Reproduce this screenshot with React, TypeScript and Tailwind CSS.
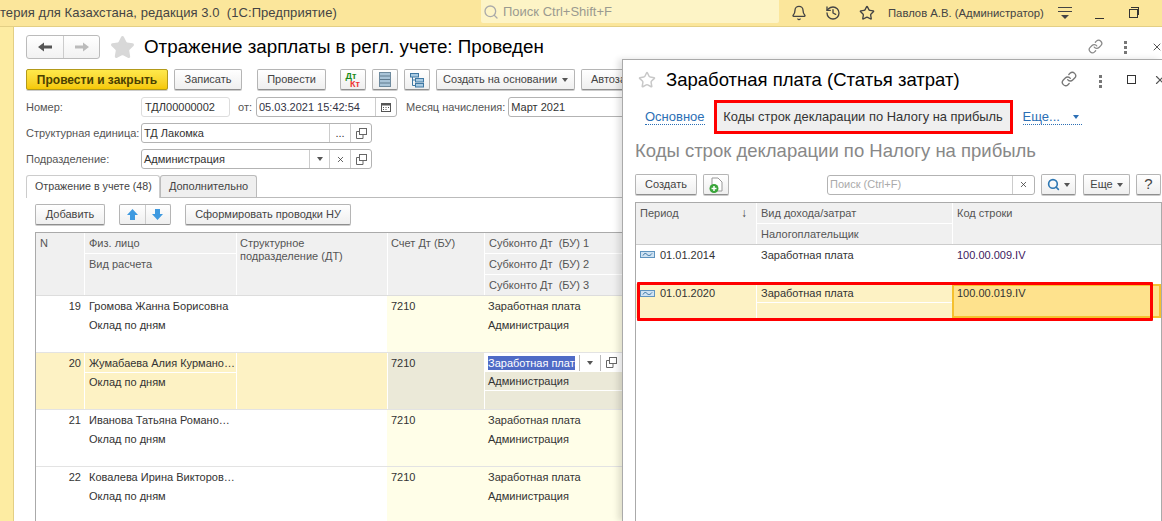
import React from 'react';
import { Bell, History, Star, Link, Search, X } from 'lucide-react';

const Caret = ({ className = 'border-t-[#555]' }: { className?: string }) => (
  <span className={`inline-block w-0 h-0 border-x-[3px] border-x-transparent border-t-[4px] ${className}`} />
);

const Dots = () => (
  <span className="flex flex-col gap-[2px]">
    <span className="w-[3px] h-[3px] bg-[#777]" />
    <span className="w-[3px] h-[3px] bg-[#777]" />
    <span className="w-[3px] h-[3px] bg-[#777]" />
  </span>
);

const OpenIcon = () => (
  <svg width="11" height="11" viewBox="0 0 11 11" fill="none" stroke="#666" strokeWidth="1">
    <rect x="3.5" y="0.5" width="7" height="6" />
    <path d="M3 3.5H0.5V10.5H7V7" />
  </svg>
);

const TrendIcon = () => (
  <svg width="15" height="7" viewBox="0 0 15 7" className="shrink-0 mt-[6px]">
    <rect x="0.5" y="0.5" width="14" height="6" fill="#cfe2f2" stroke="#5f94bf" />
    <path d="M3 4.5C4.5 2 5.5 2 7 3.5S10 5 12 2.5" fill="none" stroke="#2e6c9e" />
  </svg>
);

const Btn = ({ children, className = '' }: { children: React.ReactNode; className?: string }) => (
  <div className={`h-[21px] flex items-center justify-center rounded-[2px] border border-[#b5b5b5] border-b-[#8f8f8f] bg-gradient-to-b from-white to-[#efefef] text-[#444] shadow-[0_1px_0_#ccc] ${className}`}>
    {children}
  </div>
);

const Field = ({ children, className = '' }: { children: React.ReactNode; className?: string }) => (
  <div className={`h-[20px] flex items-center rounded-[3px] border border-[#b3b3b3] bg-white text-[#333] ${className}`}>
    {children}
  </div>
);

const Cell = ({ children, className = '' }: { children?: React.ReactNode; className?: string }) => (
  <div className={`h-[19px] leading-[19px] px-[4px] whitespace-nowrap overflow-hidden ${className}`}>{children}</div>
);

const HCell = ({ children }: { children?: React.ReactNode }) => (
  <div className="h-[21px] leading-[20px] px-[4px] bg-[#f0f0f0] text-[#555] whitespace-pre border-b border-white">{children}</div>
);

const rows = [
  { n: '19', name: 'Громова Жанна Борисовна' },
  { n: '20', name: 'Жумабаева Алия Курмано…', active: true },
  { n: '21', name: 'Иванова Татьяна Романо…' },
  { n: '22', name: 'Ковалева Ирина Викторов…' },
];

const MainTable = () => (
  <div className="ml-[9px] border-l border-t border-[#aaa] text-[11px]">
    <div className="flex h-[63px] border-b border-[#ddd]">
      <div className="w-[48px] bg-[#f0f0f0] px-[4px] text-[#555] leading-[20px]">N</div>
      <div className="w-[152px] border-l border-white flex flex-col">
        <HCell>Физ. лицо</HCell>
        <div className="flex-1 bg-[#f0f0f0] px-[4px] text-[#555] leading-[20px]">Вид расчета</div>
      </div>
      <div className="w-[151px] bg-[#f0f0f0] border-l border-white px-[3px] pt-[4px] text-[#555] leading-[13px]">
        Структурное подразделение (ДТ)
      </div>
      <div className="w-[97px] bg-[#f0f0f0] border-l border-white px-[3px] text-[#555] leading-[20px]">Счет Дт (БУ)</div>
      <div className="flex-1 border-l border-white flex flex-col">
        <HCell>Субконто Дт  (БУ) 1</HCell>
        <HCell>Субконто Дт  (БУ) 2</HCell>
        <div className="flex-1 bg-[#f0f0f0] px-[4px] text-[#555] leading-[20px] whitespace-pre">Субконто Дт  (БУ) 3</div>
      </div>
    </div>
    {rows.map((r) => (
      <div key={r.n} className="flex h-[57px] border-b border-[#e3e3e3] text-[#333]">
        <div className={`w-[48px] text-right pr-[3px] pt-[1px] leading-[19px] ${r.active ? 'bg-[#fdf2c4]' : ''}`}>{r.n}</div>
        <div className={`w-[152px] pt-[1px] flex flex-col border-l ${r.active ? 'bg-[#fdf2c4] border-white' : 'border-transparent'}`}>
          <Cell className={r.active ? 'border-b border-white' : ''}>{r.name}</Cell>
          <Cell>Оклад по дням</Cell>
        </div>
        <div className={`w-[151px] border-l ${r.active ? 'bg-[#fdf2c4] border-white' : 'border-transparent'}`} />
        <div className={`w-[97px] px-[3px] pt-[1px] leading-[19px] border-l ${r.active ? 'bg-[#ebe9d8] border-white' : 'bg-[#fffee8] border-transparent'}`}>7210</div>
        <div className={`flex-1 flex flex-col border-l ${r.active ? 'bg-[#ebe9d8] border-white' : 'bg-[#fffee8] pt-[1px] border-transparent'}`}>
          {r.active ? (
            <div className="h-[19px] bg-white flex items-center pl-[4px] -ml-[1px]">
              <span className="w-[87px] overflow-hidden whitespace-nowrap bg-[#4f6bc6] text-white leading-[14px]">Заработная плата</span>
              <span className="w-[22px] h-[16px] border-x border-[#bbb] ml-[4px] flex items-center justify-center"><Caret /></span>
              <span className="w-[21px] flex justify-center"><OpenIcon /></span>
            </div>
          ) : (
            <Cell className="!px-[3px]">Заработная плата</Cell>
          )}
          <Cell className={`!px-[3px] ${r.active ? 'border-b border-white' : ''}`}>Администрация</Cell>
        </div>
      </div>
    ))}
  </div>
);

const Form = () => (
  <div className="flex-1 min-w-0 pl-[12px] pt-[8px] text-[11px] text-[#555]">
    <div className="flex items-center h-[24px]">
      <div className="w-[74px] h-[24px] flex rounded-[3px] border border-[#bbb] bg-gradient-to-b from-white to-[#f2f2f2]">
        <div className="w-[37px] flex items-center justify-center border-r border-[#ccc]">
          <svg width="16" height="12" viewBox="0 0 16 12" fill="#555"><path d="M1 6L7 1.5V4.5H15V7.5H7V10.5Z" /></svg>
        </div>
        <div className="flex-1 flex items-center justify-center">
          <svg width="16" height="12" viewBox="0 0 16 12" fill="#bbb"><path d="M15 6L9 1.5V4.5H1V7.5H9V10.5Z" /></svg>
        </div>
      </div>
      <Star size={25} className="ml-[10px] text-[#d8d8d8] fill-[#d8d8d8]" />
      <div className="ml-[9px] text-[18.8px] text-black whitespace-nowrap">Отражение зарплаты в регл. учете: Проведен</div>
    </div>

    <div className="flex items-center mt-[10px]">
      <div className="w-[142px] h-[21px] flex items-center justify-center rounded-[2px] border border-[#b39a1a] bg-gradient-to-b from-[#ffe94a] to-[#f5c800] text-[12px] font-bold text-[#4a4000] shadow-[0_1px_0_#ccc]">Провести и закрыть</div>
      <Btn className="w-[68px] ml-[6px]">Записать</Btn>
      <Btn className="w-[69px] ml-[15px]">Провести</Btn>
      <Btn className="w-[26px] ml-[14px] !flex-col text-[9px] font-bold leading-[8px]">
        <span className="text-[#1a8a1a] -ml-[4px]">Дт</span>
        <span className="text-[#e33] ml-[4px]">Кт</span>
      </Btn>
      <Btn className="w-[26px] ml-[6px]">
        <svg width="12" height="15" viewBox="0 0 12 15"><rect x="0.5" y="0.5" width="11" height="14" fill="#a9c4d8" stroke="#6e8a9e" /><path d="M1 4H11M1 7.5H11M1 11H11" stroke="#5f7a8e" /></svg>
      </Btn>
      <Btn className="w-[26px] ml-[6px]">
        <svg width="16" height="16" viewBox="0 0 16 16" fill="#a9cbe3" stroke="#3f78a3"><rect x="1.5" y="1.5" width="8" height="3.5" /><rect x="6.5" y="6.5" width="8" height="3.5" /><rect x="6.5" y="11.5" width="8" height="3.5" /><path d="M3.5 5V13.5H6.5M3.5 8H6.5" fill="none" /></svg>
      </Btn>
      <Btn className="w-[139px] ml-[6px] gap-[5px] whitespace-nowrap">Создать на основании <Caret /></Btn>
      <Btn className="w-[80px] ml-[6px] !justify-start pl-[9px] whitespace-nowrap overflow-hidden">Автозаполнение</Btn>
    </div>

    <div className="flex items-center mt-[7px] h-[20px]">
      <span className="w-[115px]">Номер:</span>
      <Field className="w-[89px] px-[3px] !border-[#ddd]">ТДЛ00000002</Field>
      <span className="ml-[8px]">от:</span>
      <Field className="w-[141px] ml-[4px] pl-[2px]">
        <span className="flex-1 whitespace-nowrap text-[#334]">05.03.2021 15:42:54</span>
        <span className="w-[21px] h-full border-l border-[#ccc] flex items-center justify-center">
          <svg width="10" height="10" viewBox="0 0 10 10"><rect x="0.5" y="1.5" width="9" height="8" fill="none" stroke="#555" /><path d="M0 1H10V3.5H0ZM2 5H3V6H2ZM4.5 5H5.5V6H4.5ZM7 5H8V6H7ZM2 7H3V8H2ZM4.5 7H5.5V8H4.5Z" fill="#555" /></svg>
        </span>
      </Field>
      <span className="ml-[9px] whitespace-nowrap">Месяц начисления:</span>
      <Field className="w-[130px] ml-[3px] px-[2px]">Март 2021</Field>
    </div>

    <div className="flex items-center mt-[6px] h-[20px]">
      <span className="w-[115px] whitespace-nowrap">Структурная единица:</span>
      <Field className="w-[231px]">
        <span className="flex-1 px-[2px]">ТД Лакомка</span>
        <span className="w-[21px] h-full border-l border-[#ccc] flex items-center justify-center">...</span>
        <span className="w-[21px] h-full border-l border-[#ccc] flex items-center justify-center"><OpenIcon /></span>
      </Field>
    </div>

    <div className="flex items-center mt-[6px] h-[20px]">
      <span className="w-[115px]">Подразделение:</span>
      <Field className="w-[231px]">
        <span className="flex-1 px-[2px]">Администрация</span>
        <span className="w-[20px] h-full border-l border-[#ccc] flex items-center justify-center"><Caret /></span>
        <span className="w-[21px] h-full border-l border-[#ccc] flex items-center justify-center"><X size={9} /></span>
        <span className="w-[21px] h-full border-l border-[#ccc] flex items-center justify-center"><OpenIcon /></span>
      </Field>
    </div>

    <div className="flex h-[23px] mt-[6px] border-b border-[#bbb]">
      <div className="w-[134px] h-[23px] pb-[2px] pl-[8px] bg-white border border-b-0 border-[#ccc] rounded-t-[3px] text-[#444] text-[10.7px] flex items-center z-10 whitespace-nowrap">Отражение в учете (48)</div>
      <div className="w-[97px] pb-[1px] bg-[#efefef] border border-b-0 border-[#bbb] rounded-t-[3px] text-[#444] flex items-center justify-center whitespace-nowrap">Дополнительно</div>
    </div>

    <div className="flex items-center mt-[6px] ml-[9px]">
      <Btn className="w-[70px]">Добавить</Btn>
      <div className="ml-[14px] flex w-[52px] h-[21px] rounded-[2px] border border-[#b5b5b5] border-b-[#8f8f8f] bg-gradient-to-b from-white to-[#efefef]">
        <div className="flex-1 border-r border-[#ccc] flex items-center justify-center">
          <svg width="13" height="13" viewBox="0 0 13 13" fill="#3f9ae0"><path d="M6.5 1L12 7H9V12H4V7H1Z" /></svg>
        </div>
        <div className="flex-1 flex items-center justify-center">
          <svg width="13" height="13" viewBox="0 0 13 13" fill="#3f9ae0"><path d="M6.5 12L12 6H9V1H4V6H1Z" /></svg>
        </div>
      </div>
      <Btn className="w-[166px] ml-[14px] whitespace-nowrap">Сформировать проводки НУ</Btn>
    </div>

    <div className="mt-[7px]"><MainTable /></div>
  </div>
);

const SidePanel = () => (
  <div className="absolute left-[622px] top-[59px] w-[540px] h-[462px] bg-white border-l border-t border-[#aaa] shadow-[-4px_0_6px_rgba(0,0,0,0.12)] text-[11px] text-[#555]">
    <div className="flex items-center h-[40px] pl-[15px]">
      <Star size={18} className="text-[#c8c8c8] shrink-0" />
      <div className="ml-[10px] text-[18.5px] text-black whitespace-nowrap">Заработная плата (Статья затрат)</div>
      <Link size={16} className="absolute left-[438px] top-[11px] text-[#777]" />
      <span className="absolute left-[476px] top-[15px]"><Dots /></span>
      <span className="absolute left-[504px] top-[15px] w-[9px] h-[9px] border border-[#333]" />
      <X size={14} className="absolute left-[530px] top-[13px] text-[#555]" />
    </div>
    <div className="flex items-center h-[34px] pl-[22px]">
      <span className="text-[#2c6fb5] text-[13px] border-b border-dotted border-[#2c6fb5] leading-[14px]">Основное</span>
      <div className="ml-[9px] w-[299px] h-[34px] flex items-center justify-center bg-[#efefef] border-[3px] border-[#ff0000] text-[#333] text-[12.9px] whitespace-nowrap">Коды строк декларации по Налогу на прибыль</div>
      <span className="ml-[10px] w-[59px] text-[#2c6fb5] text-[13px] border-b border-dotted border-[#2c6fb5] leading-[14px] flex items-center justify-between">Еще... <Caret className="border-t-[#2c6fb5] mr-[3px]" /></span>
    </div>
    <div className="mt-[5px] pl-[12px] text-[18.5px] text-[#888] whitespace-nowrap h-[24px] leading-[24px]">Коды строк декларации по Налогу на прибыль</div>

    <div className="flex items-center mt-[11px] pl-[12px]">
      <Btn className="w-[62px]">Создать</Btn>
      <Btn className="w-[26px] ml-[6px]">
        <svg width="14" height="16" viewBox="0 0 14 16"><path d="M3 1H9L13 5V14H3Z" fill="#fff" stroke="#999" /><circle cx="5" cy="11.5" r="4.5" fill="#3aa53a" /><path d="M2.5 11.5H7.5M5 9V14" stroke="#fff" strokeWidth="1.5" /></svg>
      </Btn>
      <Field className="w-[208px] ml-[98px]">
        <span className="flex-1 px-[2px] text-[#aaa]">Поиск (Ctrl+F)</span>
        <span className="w-[22px] h-full border-l border-[#ccc] flex items-center justify-center"><X size={9} /></span>
      </Field>
      <Btn className="w-[35px] ml-[6px] gap-[4px]"><Search size={13} strokeWidth={3} className="text-[#2d77b3]" /><Caret /></Btn>
      <Btn className="w-[47px] ml-[7px] gap-[4px]">Еще <Caret /></Btn>
      <Btn className="w-[25px] ml-[6px] text-[15px] text-[#222]">?</Btn>
    </div>

    <div className="mt-[7px] ml-[12px] border-l border-t border-r border-[#aaa] h-[400px]">
      <div className="flex h-[42px] border-b border-[#ccc]">
        <div className="w-[120px] bg-[#f0f0f0] flex justify-between px-[4px] leading-[20px]">Период <span className="text-[12px] mr-[5px] text-[#444]">↓</span></div>
        <div className="w-[196px] border-l border-white flex flex-col">
          <HCell>Вид дохода/затрат</HCell>
          <div className="flex-1 bg-[#f0f0f0] px-[4px] leading-[20px]">Налогоплательщик</div>
        </div>
        <div className="flex-1 bg-[#f0f0f0] border-l border-white px-[4px] leading-[20px]">Код строки</div>
      </div>
      <div className="flex h-[39px] text-[#333] leading-[21px]">
        <div className="w-[120px] px-[4px] flex gap-[5px] h-[19px] items-start">
          <TrendIcon />
          01.01.2014
        </div>
        <div className="w-[196px] px-[5px]">Заработная плата</div>
        <div className="flex-1 px-[5px] text-[#402060]">100.00.009.IV</div>
      </div>
      <div className="flex h-[34px] text-[#333] leading-[19px]">
        <div className="w-[120px] px-[4px] flex gap-[5px] h-full bg-[#fdf2c4] items-start">
          <TrendIcon />
          01.01.2020
        </div>
        <div className="w-[196px] bg-[#fdf2c4] border-l border-white flex flex-col">
          <Cell className="border-b border-white">Заработная плата</Cell>
        </div>
        <div className="flex-1 bg-[#fee28d] border-2 border-[#f5c02f] px-[3px] leading-[15px]">100.00.019.IV</div>
      </div>
    </div>

    <div className="absolute left-[14px] top-[222px] w-[516px] h-[39px] border-[3px] border-[#ff0000] rounded-[1px]" />
  </div>
);

export default function App() {
  return (
    <div className="relative w-[1162px] h-[521px] overflow-hidden bg-white font-['Liberation_Sans',Arial,sans-serif]">
      <div className="h-[27px] flex items-center bg-[#fbe69b] border-b border-[#e3cf85] text-[#444]">
        <div className="w-[481px] text-[13px] whitespace-pre overflow-hidden tracking-[0.06px]">терия для Казахстана, редакция 3.0  (1С:Предприятие)</div>
        <div className="w-[298px] h-[23px] -mt-[3px] bg-[#fdf4c6] rounded-b-[2px] flex items-center pl-[2px] text-[13px] text-[#9a9a90]">
          <Search size={16} className="text-[#aaa] mr-[4px]" />
          Поиск Ctrl+Shift+F
        </div>
        <Bell size={16} className="ml-[12px]" />
        <History size={16} className="ml-[18px]" />
        <Star size={16} className="ml-[18px]" />
        <span className="ml-[13px] text-[11.3px] whitespace-nowrap">Павлов А.В. (Администратор)</span>
        <span className="ml-[14px] flex flex-col items-center gap-[3px]">
          <span className="w-[14px] h-[1px] bg-[#444]" />
          <span className="w-[14px] h-[1px] bg-[#444]" />
          <span className="w-0 h-0 border-x-[4px] border-x-transparent border-t-[4px] border-t-[#444]" />
        </span>
        <span className="ml-[23px] mt-[10px] w-[9px] h-[1px] bg-[#333]" />
        <span className="ml-[25px] relative w-[9px] h-[9px] border border-[#333]">
          <span className="absolute -top-[3px] left-[1px] w-[8px] h-[8px] border-t border-r border-[#333]" />
        </span>
      </div>
      <div className="flex h-[494px]">
        <div className="w-[14px] bg-[#fdeca2] border-r border-[#e3cf85]" />
        <Form />
      </div>
      <Link size={15} className="absolute left-[1088px] top-[39px] text-[#888]" />
      <span className="absolute left-[1124px] top-[41px]"><Dots /></span>
      <X size={12} className="absolute left-[1151px] top-[41px] text-[#555]" />
      <SidePanel />
    </div>
  );
}
